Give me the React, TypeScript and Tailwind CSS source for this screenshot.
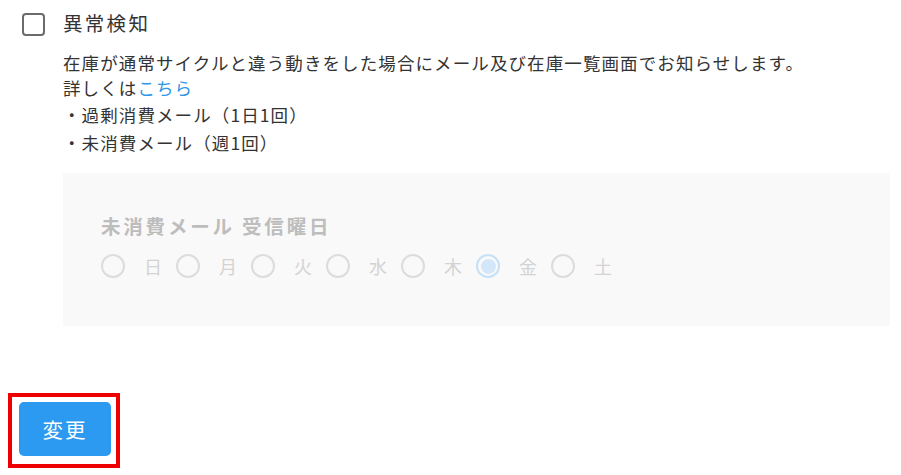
import React from 'react';

const DAYS = ['日', '月', '火', '水', '木', '金', '土'];
const FONT = { fontFamily: '"Noto Sans CJK JP", "Noto Sans", sans-serif' };

export default function App() {
  const selected = '金';

  return (
    <div className="min-h-[475px] w-full bg-white text-[#333333]" style={FONT}>
      {/* Option header */}
      <div className="flex items-center pl-[22px] pt-[13px]">
        <div className="w-[23px] h-[23px] rounded-[4px] border-2 border-[#6b6b6b] bg-white shrink-0" />
        <span className="ml-[18px] text-[19.5px] leading-[24px] tracking-[2.3px] -mt-[3px]">異常検知</span>
      </div>

      {/* Description */}
      <div className="ml-[63px] mt-[14px] text-[17.5px] tracking-[1.1px]">
        <p className="leading-[25px]">在庫が通常サイクルと違う動きをした場合にメール及び在庫一覧画面でお知らせします。</p>
        <p className="leading-[25px]">
          詳しくは<a className="text-[#2f96e8]">こちら</a>
        </p>
        <ul className="leading-[28px] mt-[1px]">
          <li>・過剰消費メール（1日1回）</li>
          <li>・未消費メール（週1回）</li>
        </ul>

        {/* Disabled panel */}
        <div className="mt-[16px] w-[827px] h-[153px] bg-[#f9f9f9] pl-[38px] pt-[41px] tracking-normal">
          <div className="text-[19.5px] leading-[24px] font-bold text-[#bdbdbd] tracking-[2.8px]">未消費メール 受信曜日</div>
          <div className="flex items-center mt-[16px] h-[24px]">
            {DAYS.map((d) => (
              <div key={d} className="flex items-center mr-[14px]">
                {d === selected ? (
                  <div className="w-[24px] h-[24px] rounded-full border-2 border-[#c6e1f6] flex items-center justify-center">
                    <div className="w-[15px] h-[15px] rounded-full bg-[#d2e8fa]" />
                  </div>
                ) : (
                  <div className="w-[24px] h-[24px] rounded-full border-[2.5px] border-[#dcdcdc]" />
                )}
                <span className="ml-[19px] text-[18px] leading-[24px] text-[#d3d3d3]">{d}</span>
              </div>
            ))}
          </div>
        </div>
      </div>

      {/* Submit */}
      <div className="mt-[67px] ml-[8px] w-[112px] h-[75px] border-4 border-[#ee0000] pl-[7px] pt-[5px]">
        <button className="w-[92px] h-[54px] rounded-[5px] bg-[#2b9af0] text-white text-[20.5px] tracking-[2px]">変更</button>
      </div>
    </div>
  );
}
